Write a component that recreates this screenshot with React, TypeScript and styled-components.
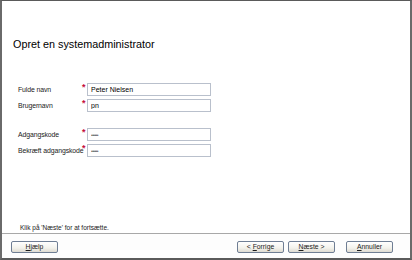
import styled, { createGlobalStyle } from "styled-components";

const GlobalStyle = createGlobalStyle`
  html, body {
    margin: 0;
    padding: 0;
    background: #ffffff;
  }
  body {
    font-family: "Liberation Sans", Arial, sans-serif;
  }
`;

const Window = styled.div`
  box-sizing: border-box;
  width: 412px;
  height: 260px;
  display: flex;
  flex-direction: column;
  background: #ffffff;
  border-top: 1px solid #5a5a5a;
  border-left: 2px solid #6a6a6a;
  border-right: 2px solid #6a6a6a;
  border-bottom: 2px solid #5a5a5a;
`;

const Content = styled.div`
  flex: 1;
  display: flex;
  flex-direction: column;
  padding: 36px 0 0 11px;
`;

const Title = styled.h1`
  margin: 0;
  font-size: 10.8px;
  line-height: 14px;
  font-weight: normal;
  color: #000000;
`;

const Form = styled.div`
  display: flex;
  flex-direction: column;
  margin-top: 32px;
  padding-left: 5px;
`;

const Group = styled.div<{ $gap?: number }>`
  display: flex;
  flex-direction: column;
  gap: 3px;
  margin-top: ${({ $gap }) => $gap ?? 0}px;
`;

const Row = styled.div`
  display: grid;
  grid-template-columns: 64px 5px 124px;
  align-items: center;
  height: 13px;
`;

const Label = styled.label`
  font-size: 6.9px;
  letter-spacing: -0.1px;
  color: #1a1a1a;
  white-space: nowrap;
`;

const Required = styled.span`
  align-self: start;
  font-size: 9px;
  line-height: 9px;
  font-weight: bold;
  color: #c4103a;
`;

const Input = styled.input<{ $secret?: boolean }>`
  box-sizing: border-box;
  width: 124px;
  height: 13px;
  margin: 0;
  padding: 0 0 0 3px;
  border: 1px solid #b9c0cc;
  background: #ffffff;
  font-family: "Liberation Sans", Arial, sans-serif;
  font-size: ${({ $secret }) => ($secret ? "5px" : "7px")};
  letter-spacing: ${({ $secret }) => ($secret ? "-0.6px" : "0")};
  color: ${({ $secret }) => ($secret ? "#666666" : "#000000")};
  outline: none;
`;

const Hint = styled.div`
  margin-top: auto;
  padding: 0 0 1px 7px;
  font-size: 6.5px;
  line-height: 8px;
  color: #1a1a1a;
`;

const Footer = styled.div`
  display: flex;
  align-items: flex-start;
  height: 25px;
  box-sizing: border-box;
  padding: 7px 17px 0 9px;
  border-top: 1px solid #a8a8a8;
  background: #fdfdfd;
`;

const Spacer = styled.div`
  flex: 1;
`;

const Button = styled.button<{ $gap?: number }>`
  box-sizing: border-box;
  width: 47px;
  height: 12px;
  margin: 0 0 0 ${({ $gap }) => $gap ?? 0}px;
  padding: 0;
  border: 1px solid #6f7e94;
  border-radius: 2px;
  background: linear-gradient(#ffffff, #f3f2ec 60%, #dedbd2);
  font-family: "Liberation Sans", Arial, sans-serif;
  font-size: 6.8px;
  line-height: 10px;
  color: #1a1a1a;

  u {
    text-decoration: underline;
  }
`;

const fields = [
  { label: "Fulde navn", value: "Peter Nielsen" },
  { label: "Brugernavn", value: "pn" },
];

const passwords = [
  { label: "Adgangskode", value: "••••••" },
  { label: "Bekræft adgangskode", value: "••••••" },
];

export default function App() {
  return (
    <>
      <GlobalStyle />
      <Window>
        <Content>
          <Title>Opret en systemadministrator</Title>
          <Form>
            <Group>
              {fields.map((f) => (
                <Row key={f.label}>
                  <Label>{f.label}</Label>
                  <Required>*</Required>
                  <Input readOnly value={f.value} />
                </Row>
              ))}
            </Group>
            <Group $gap={16}>
              {passwords.map((f) => (
                <Row key={f.label}>
                  <Label>{f.label}</Label>
                  <Required>*</Required>
                  <Input readOnly $secret value={f.value} />
                </Row>
              ))}
            </Group>
          </Form>
          <Hint>Klik på 'Næste' for at fortsætte.</Hint>
        </Content>
        <Footer>
          <Button>
            <u>H</u>jælp
          </Button>
          <Spacer />
          <Button>
            &lt; <u>F</u>orrige
          </Button>
          <Button $gap={4}>
            <u>N</u>æste &gt;
          </Button>
          <Button $gap={11}>
            <u>A</u>nnuller
          </Button>
        </Footer>
      </Window>
    </>
  );
}
